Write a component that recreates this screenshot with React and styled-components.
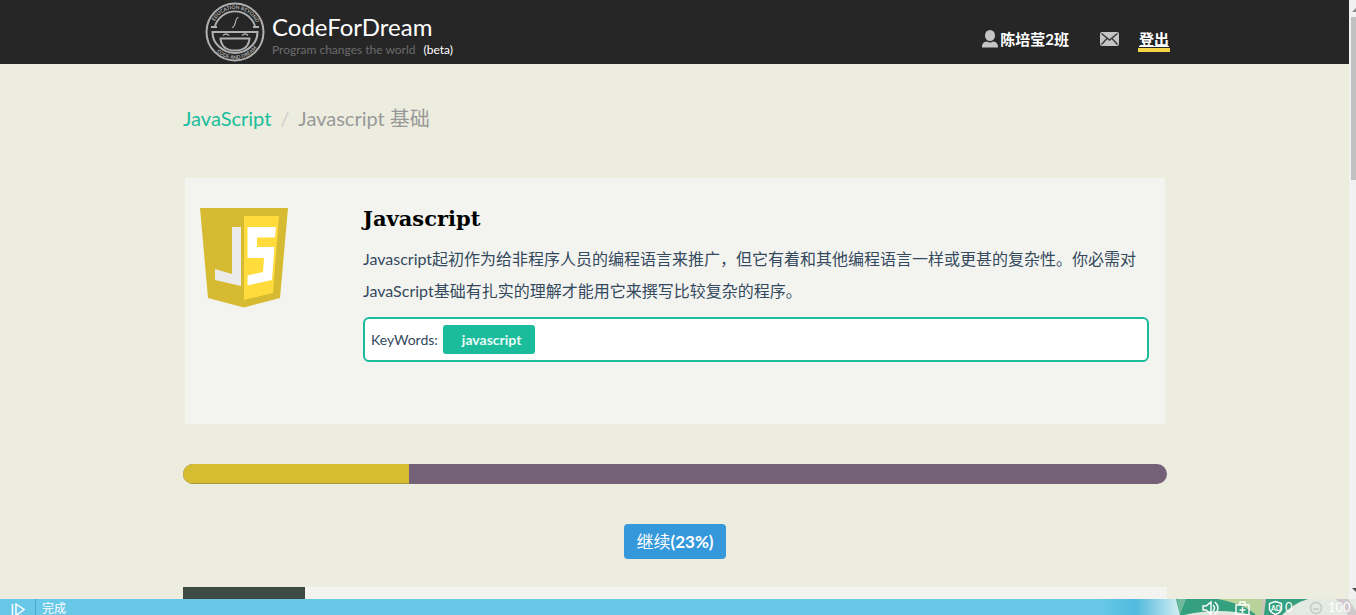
import React from 'react';
import styled, { createGlobalStyle } from 'styled-components';

const GlobalStyle = createGlobalStyle`
  *, *::before, *::after { box-sizing: border-box; }
  html, body { margin: 0; padding: 0; }
  body {
    font-family: Lato, "Noto Sans CJK SC", sans-serif;
    font-size: 16px;
    color: #34495e;
    background: #ecedde;
  }
`;

const Screen = styled.div`
  height: 100vh;
  display: grid;
  grid-template-columns: minmax(0, 1fr) 6px;
  grid-template-rows: minmax(0, 1fr) 16px;
`;

const Page = styled.div`
  overflow: hidden;
`;

const Header = styled.header`
  height: 64px;
  background: #262626;
  display: flex;
  justify-content: center;
`;

const HeaderInner = styled.div`
  width: 100%;
  max-width: 984px;
  padding: 2px 0 0 22px;
  display: flex;
  justify-content: space-between;
`;

const Brand = styled.a`
  display: flex;
  gap: 7px;
  color: #fff;
  text-decoration: none;
`;

const BrandText = styled.div`
  padding-top: 10px;
`;

const BrandName = styled.div`
  font-size: 24px;
  line-height: 30px;
`;

const Slogan = styled.div`
  display: flex;
  gap: 8px;
  font-size: 12px;
  line-height: 16px;
  color: #6c6c6c;
`;

const Beta = styled.span`
  color: #fff;
`;

const Nav = styled.nav`
  height: 32px;
  margin: 21px -3px 0 0;
  display: flex;
  align-items: center;
  font-size: 15px;
  font-weight: 700;
`;

const NavLink = styled.a`
  display: flex;
  align-items: center;
  gap: 1px;
  line-height: 20px;
  color: #fff;
  text-decoration: none;
  margin-left: ${(p) => p.$gap || 0}px;
`;

const LogoutLink = styled(NavLink)`
  height: 22px;
  margin-top: 4px;
  padding: 0 1px;
  border-bottom: 4px solid #f5d547;
  text-decoration: underline;
`;

const Content = styled.main`
  max-width: 984px;
  margin: 0 auto;
`;

const Breadcrumb = styled.nav`
  padding-top: 41px;
  display: flex;
  gap: 9px;
  font-size: 20px;
  line-height: 26px;
  color: #999;
`;

const CrumbLink = styled.a`
  color: #1abc9c;
  text-decoration: none;
`;

const Divider = styled.span`
  color: #ccc;
`;

const CourseCard = styled.section`
  min-height: 246px;
  margin: 47px 2px 0;
  padding: 28px 16px 62px 15px;
  background: #f3f4ef;
  display: flex;
  gap: 75px;
`;

const CourseLogo = styled.div`
  padding-top: 2px;
`;

const CourseBody = styled.div`
  flex: 1;
  min-width: 0;
`;

const Title = styled.h1`
  margin: 0;
  font-family: "DejaVu Serif", serif;
  font-size: 21px;
  line-height: 26px;
  font-weight: 700;
  color: #000;
`;

const Description = styled.p`
  margin: 11px 0 10px;
  line-height: 32px;
`;

const Keywords = styled.div`
  height: 45px;
  padding: 0 6px;
  border: 2px solid #1abc9c;
  border-radius: 6px;
  background: #fff;
  display: flex;
  align-items: center;
  gap: 5px;
  font-size: 14px;
`;

const Tag = styled.span`
  padding: 0 14px 0 19px;
  border-radius: 3px;
  background: #1abc9c;
  color: #e8fbf6;
  font-weight: 700;
  line-height: 29px;
`;

const ProgressTrack = styled.div`
  height: 20px;
  margin-top: 40px;
  border-radius: 10px;
  overflow: hidden;
  background: #746178;
`;

const ProgressFill = styled.div`
  height: 100%;
  background: #d6bc30;
  box-shadow: inset 0 -1px 0 #a89848;
`;

const Actions = styled.div`
  margin: 40px 0 28px;
  display: flex;
  justify-content: center;
`;

const ContinueButton = styled.button`
  height: 35px;
  padding: 0 12px;
  border: 0;
  border-radius: 4px;
  background: #3498db;
  color: #fff;
  font-family: inherit;
  font-size: 17px;
  line-height: 35px;
`;

const Percent = styled.span`
  font-weight: 700;
`;

const Lesson = styled.section`
  height: 120px;
  background: #f3f4ef;
`;

const LessonThumb = styled.div`
  width: 122px;
  height: 100%;
  background: #3e4b44;
`;

const ScrollTrack = styled.div`
  background: #f1f1f1;
  box-shadow: -1px 0 0 #f1f1f1;
  display: flex;
  flex-direction: column;
  justify-content: space-between;
  align-items: flex-end;
  padding: 8px 0 7px;
`;

const ScrollThumb = styled.div`
  width: 5px;
  flex: 0 0 163px;
  margin: 5px 0 auto;
  background: #c1c1c1;
`;

const StatusBar = styled.footer`
  grid-column: 1 / -1;
  position: relative;
  overflow: hidden;
  background: #68c8e8;
  color: #fff;
  display: flex;
  justify-content: space-between;
  font-size: 12px;
  line-height: 20px;
`;

const StatusLeft = styled.div`
  display: flex;
`;

const StatusToggle = styled.div`
  width: 36px;
  padding: 3px 0 0 11px;
  border-right: 1px solid #4aa8cc;
`;

const StatusText = styled.span`
  padding-left: 6px;
`;

const Scenery = styled.svg`
  display: block;
  flex: none;
`;

function Logo() {
  return (
    <svg width="60" height="60" viewBox="0 0 60 60" fill="none" stroke="#b0b0b0" aria-hidden="true">
      <defs>
        <path id="arcTop" d="M7 30a23 23 0 0 1 46 0" />
        <path id="arcBottom" d="M3 30a27 27 0 0 0 54 0" />
      </defs>
      <circle cx="30" cy="30" r="28.500" strokeWidth="2" />
      <path d="M10 24a21 21 0 0 1 40 0" strokeWidth="1.800" />
      <path d="M6 25h6M48 25h6" strokeWidth="2" />
      <path d="M7.500 30h45q0 9-6.500 14.500a23 23 0 0 1-32 0q-6.500-5.500-6.500-14.500z" strokeWidth="2" />
      <path d="M15.500 36.500h29q-1 12-14.500 12t-14.500-12z" strokeWidth="2" />
      <path d="M18 33.500q3-3 6 0M37 33.500q3-3 6 0" strokeWidth="1.500" />
      <path d="M33.500 15.500c-4-.5-2 10-6.500 10" strokeWidth="1.200" />
      <g fill="#b0b0b0" stroke="none" fontSize="5" fontWeight="700" fontFamily="Lato, sans-serif">
        <text><textPath href="#arcTop" startOffset="11">EDUCATION BEYOND</textPath></text>
        <text><textPath href="#arcBottom" startOffset="22">CODE AND DREAM</textPath></text>
      </g>
    </svg>
  );
}

function UserIcon() {
  return (
    <svg width="18" height="18" viewBox="0 0 18 18" fill="#c4c4c4" aria-hidden="true">
      <ellipse cx="9" cy="5.500" rx="5" ry="5.500" />
      <path d="M1 17.500c0-4 1.500-5.500 5-6q3 2 6 0c3.500.5 5 2 5 6z" />
    </svg>
  );
}

function MailIcon() {
  return (
    <svg width="19" height="14" viewBox="0 0 19 14" aria-hidden="true">
      <rect width="19" height="14" rx="2" fill="#c4c4c4" />
      <path d="M1.500 1.500l8 6.500 8-6.500M1.500 12.500l5.500-6M17.500 12.500l-5.500-6" fill="none" stroke="#3a3a3a" strokeWidth="1.400" />
    </svg>
  );
}

function JsShield() {
  return (
    <svg width="88" height="100" viewBox="0 0 88 100" aria-hidden="true">
      <path d="M0 0h88l-8 90-36 9.500L8 90z" fill="#d6ba32" />
      <path d="M44 8h35l-6 77-29 7z" fill="#ffdb3c" />
      <path d="M32 19h9v59l-26-6V61l17 5z" fill="#ebebeb" />
      <path d="M47.500 19H76l-1 10.500H57V39h17.500l-2.500 33-24.500 5.500v-10L63 64l1-14H47.500z" fill="#fff" />
    </svg>
  );
}

function StatusScenery() {
  return (
    <Scenery width="256" height="16" viewBox="0 0 256 16" aria-hidden="true">
      <defs>
        <linearGradient id="sky" x1="0" x2="1">
          <stop offset="0" stopColor="#68c8e8" />
          <stop offset="0.450" stopColor="#50bade" />
          <stop offset="1" stopColor="#d5eef3" />
        </linearGradient>
      </defs>
      <rect width="80" height="16" fill="url(#sky)" />
      <path d="M76 0h180v16H80z" fill="#35a07f" />
      <path d="M118 0h46v16h-8q-10-10-38-16z" fill="#b9d29a" />
      <path d="M162 0h5l-2 16h-4z" fill="#c8c4b8" />
      <path d="M84 16q35-8 68 0z" fill="#dfe9e0" />
      <path d="M166 0h40q-24 5-38 16h-4z" fill="#35a07f" />
      <path d="M182 16q12-12 26-16h48v16z" fill="#e3e9e3" />
      <path d="M236 0h12l8 12v4h-8z" fill="#cfc8cc" />
      <path d="M77 0l3 16 6-16z" fill="#70b99c" />
      <g fill="none" stroke="#fff" strokeWidth="1.400">
        <path d="M103 7h3l5-4v12l-5-4h-3zM113 6q3 3 0 6M115 3q6 6 0 12" />
        <path d="M136 6h13v10h-13zM140 6V3h5v3M142.500 8v6M139.500 11h6" />
        <path d="M175.500 2.500l6 2v6q-1 3-6 5-5-2-6-5v-6z" />
        <circle cx="216" cy="9" r="5.500" stroke="#c3c8c5" />
        <path d="M213 10h6" stroke="#c3c8c5" />
      </g>
      <g fill="#fff" fontFamily="Lato, sans-serif" fontSize="13">
        <text x="171" y="12" fontSize="7" fontWeight="700">AD</text>
        <text x="185" y="13">0</text>
        <text x="228" y="13">100</text>
      </g>
    </Scenery>
  );
}

export default function App() {
  const progress = 23;
  return (
    <>
      <GlobalStyle />
      <Screen>
        <Page>
          <Header>
            <HeaderInner>
              <Brand href="#">
                <Logo />
                <BrandText>
                  <BrandName>CodeForDream</BrandName>
                  <Slogan>Program changes the world <Beta>(beta)</Beta></Slogan>
                </BrandText>
              </Brand>
              <Nav>
                <NavLink href="#"><UserIcon />陈培莹2班</NavLink>
                <NavLink href="#" $gap={31} aria-label="Messages"><MailIcon /></NavLink>
                <LogoutLink href="#" $gap={19}>登出</LogoutLink>
              </Nav>
            </HeaderInner>
          </Header>
          <Content>
            <Breadcrumb>
              <CrumbLink href="#">JavaScript</CrumbLink>
              <Divider>/</Divider>
              <span>Javascript 基础</span>
            </Breadcrumb>
            <CourseCard>
              <CourseLogo><JsShield /></CourseLogo>
              <CourseBody>
                <Title>Javascript</Title>
                <Description>
                  Javascript起初作为给非程序人员的编程语言来推广，但它有着和其他编程语言一样或更甚的复杂性。你必需对JavaScript基础有扎实的理解才能用它来撰写比较复杂的程序。
                </Description>
                <Keywords>KeyWords: <Tag>javascript</Tag></Keywords>
              </CourseBody>
            </CourseCard>
            <ProgressTrack role="progressbar" aria-label="Course progress" aria-valuenow={progress}>
              <ProgressFill style={{ width: `${progress}%` }} />
            </ProgressTrack>
            <Actions>
              <ContinueButton type="button">继续<Percent>({progress}%)</Percent></ContinueButton>
            </Actions>
            <Lesson><LessonThumb /></Lesson>
          </Content>
        </Page>
        <ScrollTrack>
          <svg width="4" height="4" viewBox="0 0 4 4" fill="#8a8a8a" aria-hidden="true"><path d="M0 4l4-4v4z" /></svg>
          <ScrollThumb />
          <svg width="4" height="4" viewBox="0 0 4 4" fill="#505050" aria-hidden="true"><path d="M0 0h4v4z" /></svg>
        </ScrollTrack>
        <StatusBar>
          <StatusLeft>
            <StatusToggle>
              <svg width="14" height="13" viewBox="0 0 14 13" fill="none" stroke="#fff" strokeWidth="1.500" aria-hidden="true">
                <path d="M1.500 1v12M5 1l8 5.500-8 6z" />
              </svg>
            </StatusToggle>
            <StatusText>完成</StatusText>
          </StatusLeft>
          <StatusScenery />
        </StatusBar>
      </Screen>
    </>
  );
}
